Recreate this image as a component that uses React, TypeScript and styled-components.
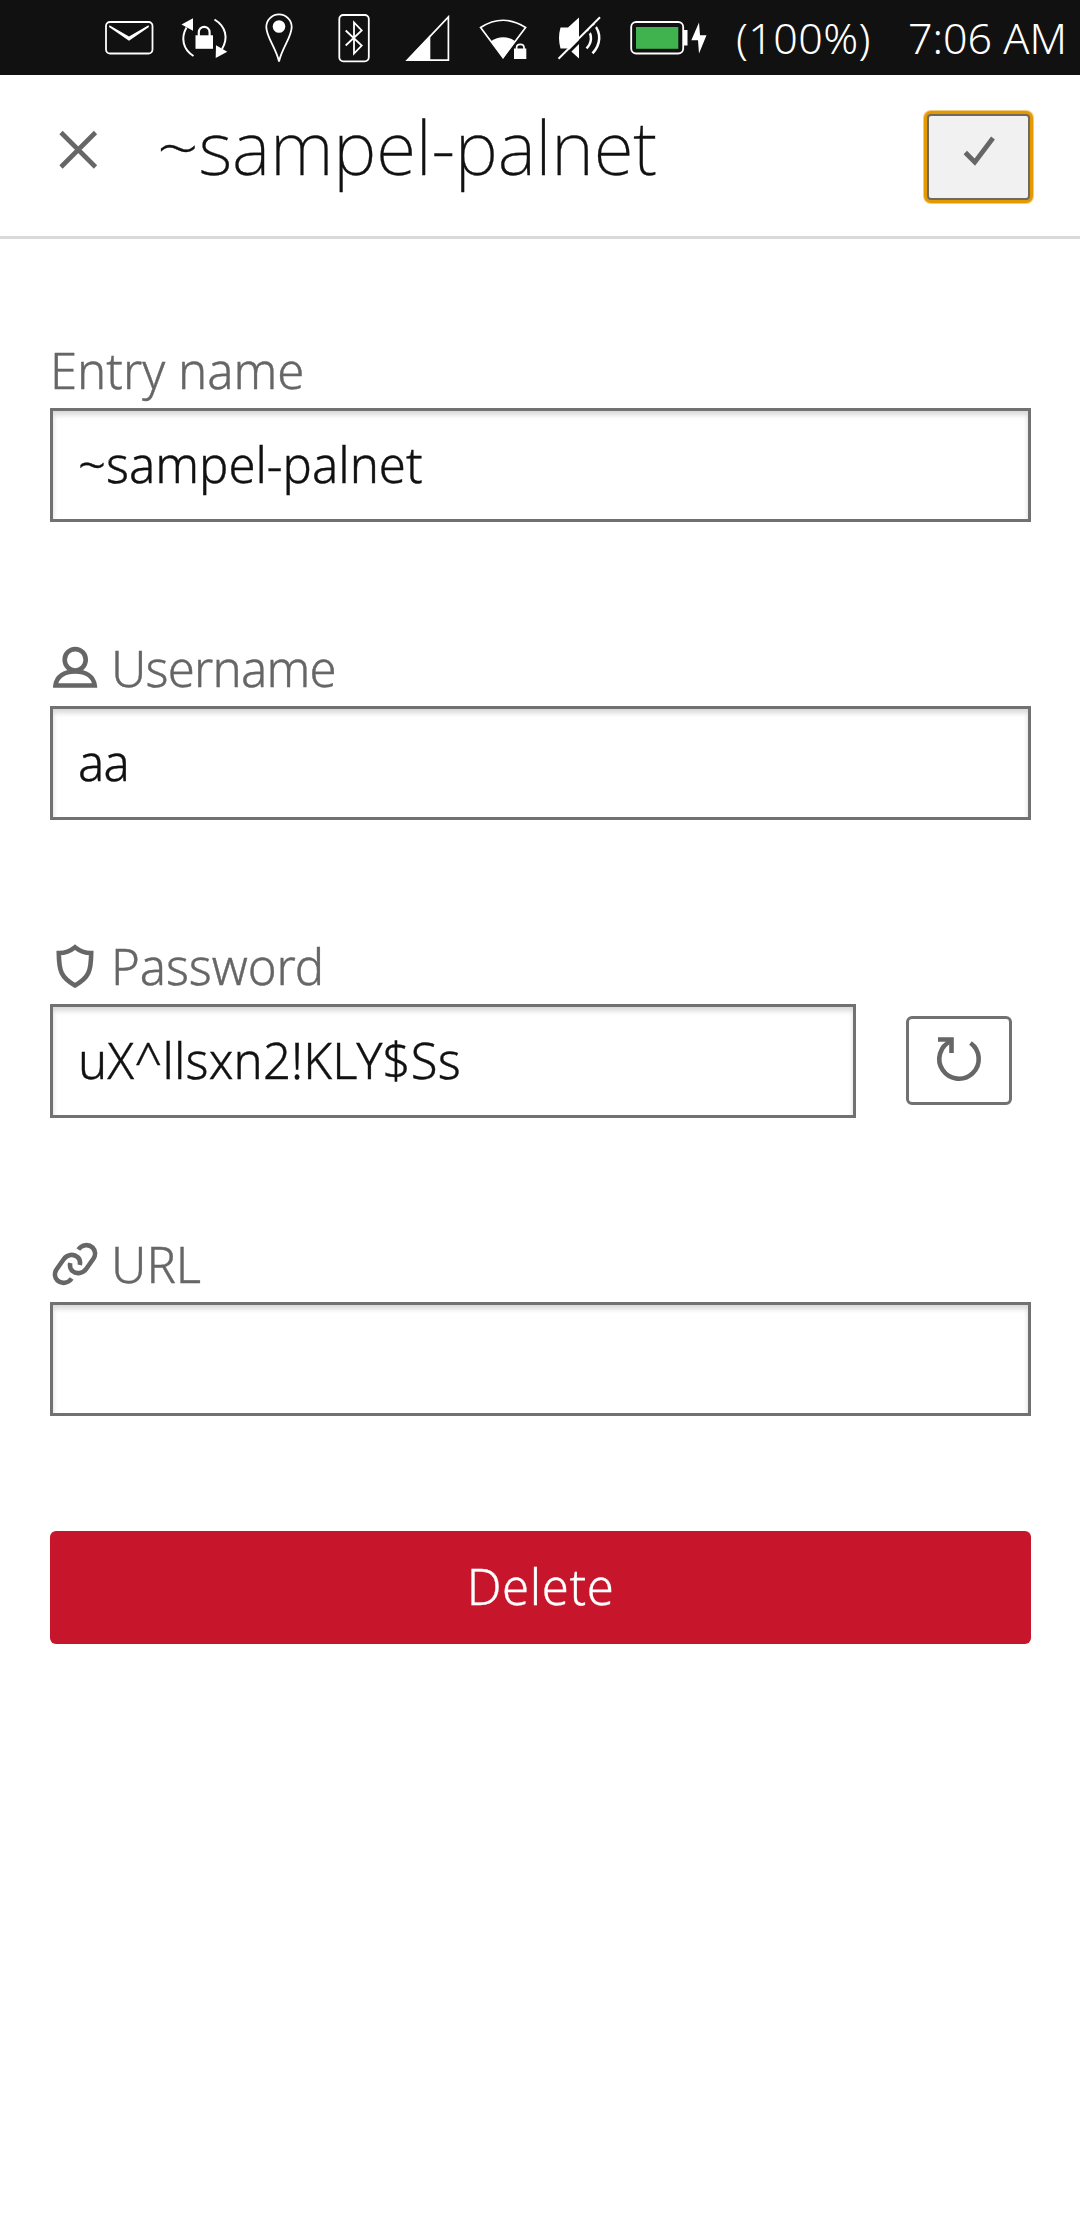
import React from "react";
import styled, { createGlobalStyle } from "styled-components";

const slate = "#666";
const rim = "#717171";

const GlobalStyle = createGlobalStyle`
  *, *::before, *::after { box-sizing: border-box; }
  body {
    margin: 0;
    background: #fff;
    color: #111;
    font-family: "Noto Sans", "Open Sans", sans-serif;
    font-weight: 300;
  }
`;

const Page = styled.div`
  width: 1080px;
  min-height: 2220px;
  display: flex;
  flex-direction: column;
  background: #fff;
`;

const StatusBar = styled.div`
  height: 75px;
  padding-right: 13px;
  display: flex;
  align-items: center;
  justify-content: flex-end;
  background: #111;
  color: #fff;
`;

const Tray = styled.div`
  display: flex;
  gap: 24px;
`;

const StatusText = styled.span<{ $width: number; $spacing: number }>`
  width: ${(p) => p.$width}px;
  font-size: 43px;
  line-height: 75px;
  letter-spacing: ${(p) => p.$spacing}px;
  white-space: nowrap;
`;

const Glyph = styled.svg`
  display: block;
  flex: none;
  overflow: visible;
`;

const Header = styled.header`
  height: 164px;
  padding: 0 48px 0 50px;
  display: flex;
  align-items: flex-start;
  border-bottom: 3px solid #d9d9d9;
`;

const IconButton = styled.button`
  padding: 0;
  border: 0;
  background: none;
  margin: 47px 51px 0 0;
`;

const Title = styled.h1`
  flex: 1;
  margin: 0;
  font-size: 73px;
  font-weight: 200;
  line-height: 143px;
  letter-spacing: -0.15px;
  -webkit-text-stroke: 0.3px currentColor;
`;

const ConfirmButton = styled.button`
  width: 103px;
  height: 86px;
  margin: 39px 2px 0 0;
  padding: 0;
  display: grid;
  place-items: center;
  border: 2px solid #6f6a5e;
  border-radius: 4px;
  background: #f1f1f1;
  box-shadow: 0 0 0 3px #e59900, 0 0 0 4px rgba(229, 153, 0, 0.5);
`;

const Form = styled.main`
  padding: 101px 49px 0 50px;
  display: flex;
  flex-direction: column;
  gap: 116px;
`;

const Field = styled.div`
  display: flex;
  flex-direction: column;
  gap: 8px;
`;

const Label = styled.div<{ $spacing?: number }>`
  height: 60px;
  display: flex;
  align-items: center;
  gap: 11px;
  color: ${slate};
  font-size: 49px;
  line-height: 60px;
  letter-spacing: ${(p) => p.$spacing ?? 0}px;
  -webkit-text-stroke: 0.4px currentColor;

  svg { margin-bottom: 2px; }
`;

const InputRow = styled.div`
  display: flex;
  align-items: center;
  gap: 50px;
`;

const Input = styled.div<{ $width?: number; $spacing?: number }>`
  width: ${(p) => (p.$width ? `${p.$width}px` : "100%")};
  height: 114px;
  padding: 0 25px 2px;
  border: 3px solid ${rim};
  background: #fff;
  box-shadow: inset 0 4px 5px rgba(17, 17, 17, 0.16);
  color: #111;
  font-size: 49px;
  line-height: 106px;
  letter-spacing: ${(p) => p.$spacing ?? 0}px;
  white-space: nowrap;
  -webkit-text-stroke: 0.4px currentColor;
`;

const RefreshButton = styled.button`
  width: 106px;
  height: 89px;
  margin-top: -2px;
  padding: 0;
  display: grid;
  place-items: center;
  border: 3px solid ${rim};
  border-radius: 6px;
  background: #fff;
`;

const DeleteButton = styled.button`
  height: 113px;
  margin-top: -1px;
  padding: 0 0 3px;
  border: 0;
  border-radius: 6px;
  background: #c7162b;
  color: #fff;
  font: 300 49px/110px "Noto Sans", "Open Sans", sans-serif;
  letter-spacing: 0.6px;
  -webkit-text-stroke: 0.3px currentColor;
`;

type IconProps = { x: number; y?: number; w: number; h?: number; children: React.ReactNode };

const Icon = ({ x, y = 0, w, h = 75, children }: IconProps) => (
  <Glyph width={w} height={h} viewBox={`${x} ${y} ${w} ${h}`} fill="none" aria-hidden>
    {children}
  </Glyph>
);

const StatusIcons = () => (
  <Tray>
    <Icon x={105} w={50}>
      <rect x="106" y="22" width="46.5" height="31.5" rx="4" stroke="#fff" strokeWidth="1.8" />
      <path d="M109.5 25.3 129 36.5 148.5 25.3 149 27 129 40.8 109 27Z" fill="#fff" />
    </Icon>
    <Icon x={179} w={54}>
      <path d="M193.5 56C183 49.5 180.5 38 186.5 27.5M214.5 19.5C226 26.5 228.5 38 222 49" stroke="#fff" strokeWidth="2" />
      <path d="M181.5 24.5 193 18.3V30.8ZM216 45.2 227.3 51.7 215.7 58Z" fill="#fff" />
      <rect x="195.5" y="35.3" width="17.5" height="13.5" fill="#fff" />
      <path d="M198.8 36v-3.5c0-7.5 10.8-7.5 10.8 0V36" stroke="#fff" strokeWidth="2.2" />
    </Icon>
    <Icon x={257} w={48}>
      <path d="M279 61.5C276 48 266.3 37 266.3 27A12.7 12.7 0 0 1 291.7 27C291.7 37 282 48 279 61.5Z" stroke="#fff" strokeWidth="1.8" />
      <circle cx="279" cy="26.5" r="6.3" fill="#fff" />
    </Icon>
    <Icon x={329} w={52}>
      <rect x="339.3" y="15" width="29.5" height="46.3" rx="4" stroke="#fff" strokeWidth="1.8" />
      <path d="M345.7 30.5 361.7 45.5 354 53.5V22.5L361.7 30.5 345.7 45.5" stroke="#fff" strokeWidth="1.8" />
    </Icon>
    <Icon x={405} w={48}>
      <path d="M407.5 60.2H448.4V17Z" stroke="#fff" strokeWidth="1.7" />
      <path d="M405.5 61 430.3 35V61Z" fill="#fff" />
    </Icon>
    <Icon x={477} w={54}>
      <path d="M503 57.5 480.6 27.5Q503 13 525.6 27.5Z" stroke="#fff" strokeWidth="1.7" />
      <path d="M503 58.5 490.8 41.3Q503 33 515.3 41.3Z" fill="#fff" />
      <path d="M512.5 62V47.5Q520 37 528 47.5V62Z" fill="#111" />
      <rect x="514" y="48.5" width="12.3" height="10.5" fill="#fff" />
      <path d="M516.6 49v-1.5c0-4.3 7.4-4.3 7.4 0V49" stroke="#fff" strokeWidth="1.7" />
    </Icon>
    <Icon x={555} w={50}>
      <path d="M560.5 27.5H568L579 17.5V58.5L568 48.5H560.5Q557.5 38 560.5 27.5Z" fill="#fff" />
      <path d="M587.5 29.5C592.5 35 592 43 586.5 48.3M593.5 24C602 33 600.5 45 592.5 53.3" stroke="#fff" strokeWidth="2.5" />
      <path d="M560.5 60.5 602 19" stroke="#111" strokeWidth="2.8" />
      <path d="M558.5 58.8 600 17.3" stroke="#fff" strokeWidth="2" />
    </Icon>
    <Icon x={629} w={107}>
      <rect x="631.2" y="22" width="52" height="31.5" rx="5" stroke="#fff" strokeWidth="1.8" />
      <rect x="636" y="27" width="42.3" height="21.8" fill="#40b34f" />
      <path d="M684 30h3.5v15.5H684Z" fill="#fff" />
      <path d="M699 22.5 691.3 40.3H698L699 53.5 706.5 35.3H700Z" fill="#fff" />
    </Icon>
  </Tray>
);

const UserIcon = () => (
  <Icon x={50} y={641} w={50} h={50}>
    <ellipse cx="75.2" cy="658.8" rx="10.5" ry="10.7" stroke={slate} strokeWidth="4.6" />
    <path d="M55.5 684.5H94.7C93.5 675.5 86 670.5 75.1 670.5S56.5 675.5 55.5 684.5Z" stroke={slate} strokeWidth="4.6" />
  </Icon>
);

const ShieldIcon = () => (
  <Icon x={50} y={940} w={50} h={50}>
    <path d="M75 947.2Q67.5 953.2 58.8 953C59 971 61 977.5 75 985.4 89 977.5 91 971 91.2 953Q82.5 953.2 75 947.2Z" stroke={slate} strokeWidth="4.6" />
  </Icon>
);

const LinkIcon = () => (
  <Icon x={50} y={1237} w={50} h={50}>
    <path d="M78.3 1248.5C82 1243.5 88.5 1242.8 92.5 1246.5 95.5 1249.5 95.8 1254 93.5 1257.5L86.5 1267.5C83 1272.5 76.5 1273.5 72.5 1270 70 1267.7 69.5 1265 70.3 1262" stroke={slate} strokeWidth="4.6" />
    <path d="M71.7 1277.5C68 1282.5 61.5 1283.2 57.5 1279.5 54.5 1276.5 54.2 1272 56.5 1268.5L63.5 1258.5C67 1253.5 73.5 1252.5 77.5 1256 80 1258.3 80.5 1261 79.7 1264" stroke={slate} strokeWidth="4.6" />
  </Icon>
);

export default function App() {
  return (
    <Page>
      <GlobalStyle />
      <StatusBar>
        <StatusIcons />
        <StatusText $width={172} $spacing={0.4}>(100%)</StatusText>
        <StatusText $width={159} $spacing={0}>7:06 AM</StatusText>
      </StatusBar>

      <Header>
        <IconButton aria-label="Close">
          <Icon x={50} y={122} w={56} h={56}>
            <path d="M61 132.5 95.5 167M95.5 132.5 61 167" stroke={slate} strokeWidth="4.6" />
          </Icon>
        </IconButton>
        <Title>~sampel-palnet</Title>
        <ConfirmButton aria-label="Save">
          <Icon x={928} y={116} w={99} h={82}>
            <path d="M964.3 152.5 973.8 162.2 992 138" stroke={slate} strokeWidth="4.8" />
          </Icon>
        </ConfirmButton>
      </Header>

      <Form>
        <Field>
          <Label>Entry name</Label>
          <Input>~sampel-palnet</Input>
        </Field>

        <Field>
          <Label $spacing={-0.8}><UserIcon />Username</Label>
          <Input $spacing={-0.8}>aa</Input>
        </Field>

        <Field>
          <Label $spacing={-0.1}><ShieldIcon />Password</Label>
          <InputRow>
            <Input $width={806} $spacing={0.15}>uX^llsxn2!KLY$Ss</Input>
            <RefreshButton aria-label="Generate password">
              <Icon x={934} y={1036} w={50} h={50}>
                <path d="M970.5 1044A19.7 19.7 0 1 1 951 1042" stroke={slate} strokeWidth="4.6" />
                <path d="M938 1040.5H951.5V1054" stroke={slate} strokeWidth="4.6" />
              </Icon>
            </RefreshButton>
          </InputRow>
        </Field>

        <Field>
          <Label><LinkIcon />URL</Label>
          <Input />
        </Field>

        <DeleteButton>Delete</DeleteButton>
      </Form>
    </Page>
  );
}
